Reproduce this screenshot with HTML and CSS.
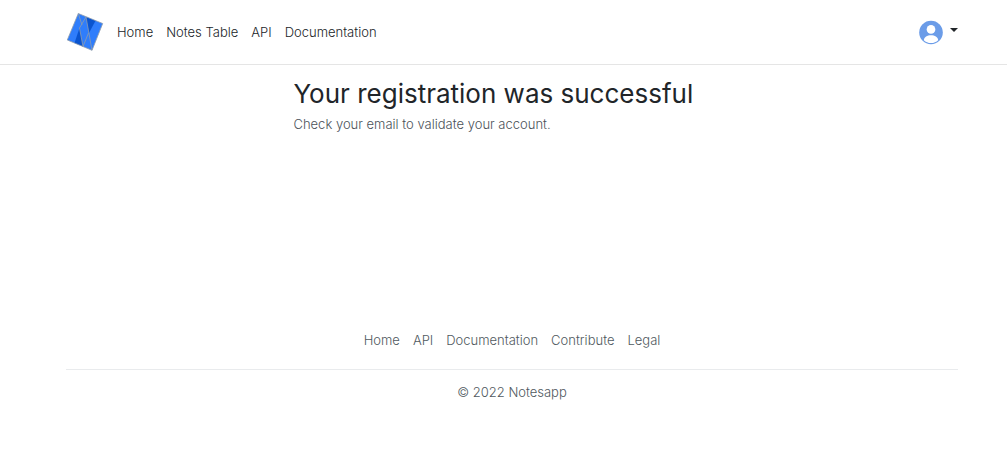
FILE: index.html
```html
<!DOCTYPE html>
<html lang="en">
<head>
<meta charset="utf-8">
<title>Notesapp</title>
<link rel="stylesheet" href="styles.css">
</head>
<body>
<header class="site-header">
  <div class="container header-row">
    <a class="brand" href="#" aria-label="Notesapp">
      <svg width="38" height="40" viewBox="0 0 38 40">
        <path fill="#2f7dfb" d="M12.300 1.500 36.700 11.500 26 38.300 1.300 28z"/>
        <path fill="#0a54cf" d="M20 5 29.500 8.700 23 21z"/>
        <path fill="#0a54cf" d="M13.500 16 17 34.500 8.500 31z"/>
        <path fill="none" stroke="#8f9cab" stroke-width=".8" stroke-linejoin="round" d="M12.300 1.500 36.700 11.500 26 38.300 1.300 28zM12.300 1.500 16 13M20 5 13.500 16 17 34.500 22.500 21M20 5 26 38.300"/>
      </svg>
    </a>
    <nav class="links main-links" aria-label="Main">
      <a href="#">Home</a>
      <a href="#">Notes Table</a>
      <a href="#">API</a>
      <a href="#">Documentation</a>
    </nav>
    <button class="account" type="button" aria-label="Account menu">
      <svg width="24" height="25" viewBox="0 0 25 25">
        <circle cx="12.500" cy="12.500" r="12.300" fill="#6b9ce8"/>
        <circle cx="12.500" cy="9.300" r="4.500" fill="#fff"/>
        <path fill="#fff" d="M5 20.500c.4-3.600 3.500-5.200 7.500-5.200s7.100 1.600 7.500 5.200c-2 1.900-4.500 3-7.500 3s-5.500-1.100-7.500-3z"/>
      </svg>
      <span class="caret"></span>
    </button>
  </div>
</header>
<main class="container">
  <div class="message">
    <h1>Your registration was successful</h1>
    <p>Check your email to validate your account.</p>
  </div>
</main>
<footer class="container site-footer">
  <nav class="links footer-links" aria-label="Footer">
    <a href="#">Home</a>
    <a href="#">API</a>
    <a href="#">Documentation</a>
    <a href="#">Contribute</a>
    <a href="#">Legal</a>
  </nav>
  <p>© 2022 Notesapp</p>
</footer>
</body>
</html>
```
FILE: styles.css
```css
* { box-sizing: border-box; }
body {
  margin: 0;
  background: #fff;
  color: #212529;
  font: 300 13px/20px Inter, "Liberation Sans", sans-serif;
}
h1, p { margin: 0; }
.container { padding: 0 49px 0 66px; }
.site-header { border-bottom: 1px solid #e5e5e5; }
.header-row {
  display: flex;
  align-items: center;
  height: 64px;
}
.brand { display: flex; margin-right: 13px; }
.links { display: flex; gap: 13px; }
.links a { color: inherit; text-decoration: none; }
.account {
  display: flex;
  gap: 7px;
  margin-left: auto;
  padding: 0;
  border: 0;
  background: none;
  color: inherit;
}
.caret {
  margin-top: 8px;
  width: 8px;
  height: 4px;
  border: solid transparent;
  border-width: 4px 4px 0;
  border-top-color: currentColor;
}
.message {
  width: 49%;
  min-height: 220px;
  margin: 0 auto;
  padding-top: 13px;
  white-space: nowrap;
}
h1 {
  margin-bottom: 4px;
  font-size: 26px;
  font-weight: 400;
  line-height: 32px;
}
.message p { color: #4b5259; }
.site-footer { color: #505960; text-align: center; }
.footer-links {
  justify-content: center;
  margin-top: 45px;
  padding-bottom: 19px;
  border-bottom: 1px solid #e9ebed;
}
.site-footer p { margin-top: 12px; }
```
